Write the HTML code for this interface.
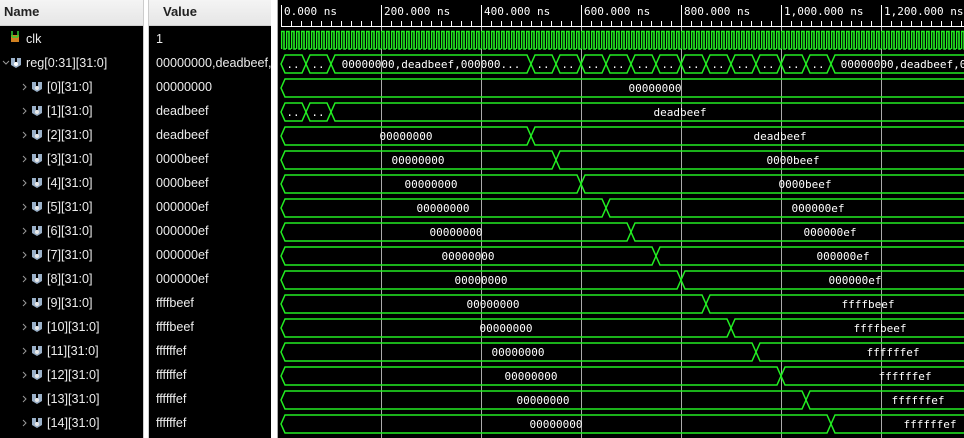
<!DOCTYPE html>
<html><head><meta charset="utf-8"><style>
body{margin:0;width:964px;height:438px;overflow:hidden;background:#fff;position:relative;font-family:"Liberation Sans",sans-serif}
.col{position:absolute;top:0;height:438px;background:#000;overflow:hidden}
.hdr{position:absolute;left:0;right:0;top:0;height:25px;background:linear-gradient(#f4f4f4,#e6e6e6);border-bottom:1px solid #cfcfcf;font-weight:bold;font-size:13px;color:#222;line-height:24px}
.r{position:absolute;height:24px;line-height:24px;font-size:12.6px;color:#ececec;white-space:nowrap}
</style></head><body>
<div class="col" style="left:0;width:143px;border-right:1px solid #ccc">
<div class="hdr" style="padding-left:4px">Name</div>
<svg width="143" height="438" style="position:absolute;left:0;top:0">
<g><rect x="11" y="35" width="8" height="7" fill="#d08020"/><path d="M12 31v6M18 31v6M12 37h6" stroke="#3c3" stroke-width="1.5" fill="none"/></g>
<path d="M3 61l3 3 3-3" stroke="#999" fill="none"/>
<g fill="#9ab0c8"><path d="M11 58h4v4h2v-4h4v7l-5 3-5-3z"/><circle cx="16" cy="64" r="2" fill="#fff"/></g>
<defs><g id="bi" fill="#9ab0c8"><path d="M0 0h4v4h2v-4h4v7l-5 3-5-3z"/><circle cx="5" cy="6" r="2" fill="#e8e8e8"/></g>
<path id="ch" d="M0 0l3 3-3 3" stroke="#999" fill="none"/></defs>
<use href="#ch" x="23" y="84"/><use href="#bi" x="32" y="82"/>
<use href="#ch" x="23" y="108"/><use href="#bi" x="32" y="106"/>
<use href="#ch" x="23" y="132"/><use href="#bi" x="32" y="130"/>
<use href="#ch" x="23" y="156"/><use href="#bi" x="32" y="154"/>
<use href="#ch" x="23" y="180"/><use href="#bi" x="32" y="178"/>
<use href="#ch" x="23" y="204"/><use href="#bi" x="32" y="202"/>
<use href="#ch" x="23" y="228"/><use href="#bi" x="32" y="226"/>
<use href="#ch" x="23" y="252"/><use href="#bi" x="32" y="250"/>
<use href="#ch" x="23" y="276"/><use href="#bi" x="32" y="274"/>
<use href="#ch" x="23" y="300"/><use href="#bi" x="32" y="298"/>
<use href="#ch" x="23" y="324"/><use href="#bi" x="32" y="322"/>
<use href="#ch" x="23" y="348"/><use href="#bi" x="32" y="346"/>
<use href="#ch" x="23" y="372"/><use href="#bi" x="32" y="370"/>
<use href="#ch" x="23" y="396"/><use href="#bi" x="32" y="394"/>
<use href="#ch" x="23" y="420"/><use href="#bi" x="32" y="418"/>
</svg>
<div class="r" style="left:26px;top:27px">clk</div>
<div class="r" style="left:26px;top:51px">reg[0:31][31:0]</div>
<div class="r" style="left:47px;top:75px">[0][31:0]</div>
<div class="r" style="left:47px;top:99px">[1][31:0]</div>
<div class="r" style="left:47px;top:123px">[2][31:0]</div>
<div class="r" style="left:47px;top:147px">[3][31:0]</div>
<div class="r" style="left:47px;top:171px">[4][31:0]</div>
<div class="r" style="left:47px;top:195px">[5][31:0]</div>
<div class="r" style="left:47px;top:219px">[6][31:0]</div>
<div class="r" style="left:47px;top:243px">[7][31:0]</div>
<div class="r" style="left:47px;top:267px">[8][31:0]</div>
<div class="r" style="left:47px;top:291px">[9][31:0]</div>
<div class="r" style="left:47px;top:315px">[10][31:0]</div>
<div class="r" style="left:47px;top:339px">[11][31:0]</div>
<div class="r" style="left:47px;top:363px">[12][31:0]</div>
<div class="r" style="left:47px;top:387px">[13][31:0]</div>
<div class="r" style="left:47px;top:411px">[14][31:0]</div>
</div>
<div class="col" style="left:148px;width:122px;border-left:1px solid #ccc">
<div class="hdr" style="padding-left:14px">Value</div>
<div class="r" style="left:7px;top:27px">1</div>
<div class="r" style="left:7px;top:51px">00000000,deadbeef,000000</div>
<div class="r" style="left:7px;top:75px">00000000</div>
<div class="r" style="left:7px;top:99px">deadbeef</div>
<div class="r" style="left:7px;top:123px">deadbeef</div>
<div class="r" style="left:7px;top:147px">0000beef</div>
<div class="r" style="left:7px;top:171px">0000beef</div>
<div class="r" style="left:7px;top:195px">000000ef</div>
<div class="r" style="left:7px;top:219px">000000ef</div>
<div class="r" style="left:7px;top:243px">000000ef</div>
<div class="r" style="left:7px;top:267px">000000ef</div>
<div class="r" style="left:7px;top:291px">ffffbeef</div>
<div class="r" style="left:7px;top:315px">ffffbeef</div>
<div class="r" style="left:7px;top:339px">ffffffef</div>
<div class="r" style="left:7px;top:363px">ffffffef</div>
<div class="r" style="left:7px;top:387px">ffffffef</div>
<div class="r" style="left:7px;top:411px">ffffffef</div>
</div>
<div style="position:absolute;left:277px;top:0;width:1px;height:438px;background:#aaa"></div>
<svg width="686" height="438" viewBox="278 0 686 438" style="position:absolute;left:278px;top:0;background:#000" font-family="DejaVu Sans Mono,Liberation Mono,monospace" font-size="11" fill="#fff">
<defs>
<pattern id="clk" x="281" y="0" width="5" height="438" patternUnits="userSpaceOnUse"><path d="M0.5 49V31.5H3V49H5" stroke="#22ee22" fill="none" stroke-width="1.6"/></pattern>
<pattern id="tk" x="281" y="0" width="10" height="30" patternUnits="userSpaceOnUse"><path d="M0.5 21V26" stroke="#fff"/></pattern>
</defs>
<rect x="281" y="0" width="690" height="27" fill="url(#tk)"/>
<path d="M281 26.5H964" stroke="#fff"/>
<g stroke="#fff"><path d="M281.5 5V26M381.5 5V26M481.5 5V26M581.5 5V26M681.5 5V26M781.5 5V26M881.5 5V26"/></g>
<g font-size="11"><text x="284" y="15">0.000 ns</text><text x="384" y="15">200.000 ns</text><text x="484" y="15">400.000 ns</text><text x="584" y="15">600.000 ns</text><text x="684" y="15">800.000 ns</text><text x="784" y="15">1,000.000 ns</text><text x="884" y="15">1,200.000 ns</text></g>
<g stroke="#aaa"><path d="M381.5 27V438M481.5 27V438M581.5 27V438M681.5 27V438M781.5 27V438M881.5 27V438"/></g>
<rect x="281" y="30" width="690" height="20" fill="url(#clk)"/>
<g stroke="#22ee22" fill="none" stroke-width="1.5">
<g transform="translate(0,51)">
<polygon points="281,13 285,4 302,4 306,13 302,22 285,22"/>
<polygon points="306,13 310,4 327,4 331,13 327,22 310,22"/>
<polygon points="331,13 335,4 527,4 531,13 527,22 335,22"/>
<polygon points="531,13 535,4 552,4 556,13 552,22 535,22"/>
<polygon points="556,13 560,4 577,4 581,13 577,22 560,22"/>
<polygon points="581,13 585,4 602,4 606,13 602,22 585,22"/>
<polygon points="606,13 610,4 627,4 631,13 627,22 610,22"/>
<polygon points="631,13 635,4 652,4 656,13 652,22 635,22"/>
<polygon points="656,13 660,4 677,4 681,13 677,22 660,22"/>
<polygon points="681,13 685,4 702,4 706,13 702,22 685,22"/>
<polygon points="706,13 710,4 727,4 731,13 727,22 710,22"/>
<polygon points="731,13 735,4 752,4 756,13 752,22 735,22"/>
<polygon points="756,13 760,4 777,4 781,13 777,22 760,22"/>
<polygon points="781,13 785,4 802,4 806,13 802,22 785,22"/>
<polygon points="806,13 810,4 827,4 831,13 827,22 810,22"/>
<polygon points="831,13 835,4 1026,4 1030,13 1026,22 835,22"/>
</g>
<g transform="translate(0,75)"><polygon points="281,13 285,4 1026,4 1030,13 1026,22 285,22"/></g>
<g transform="translate(0,99)">
<polygon points="281,13 285,4 302,4 306,13 302,22 285,22"/>
<polygon points="306,13 310,4 327,4 331,13 327,22 310,22"/>
<polygon points="331,13 335,4 1026,4 1030,13 1026,22 335,22"/></g>
<g transform="translate(0,123)"><polygon points="281,13 285,4 527,4 531,13 527,22 285,22"/><polygon points="531,13 535,4 1026,4 1030,13 1026,22 535,22"/></g>
<g transform="translate(0,147)"><polygon points="281,13 285,4 552,4 556,13 552,22 285,22"/><polygon points="556,13 560,4 1026,4 1030,13 1026,22 560,22"/></g>
<g transform="translate(0,171)"><polygon points="281,13 285,4 577,4 581,13 577,22 285,22"/><polygon points="581,13 585,4 1026,4 1030,13 1026,22 585,22"/></g>
<g transform="translate(0,195)"><polygon points="281,13 285,4 602,4 606,13 602,22 285,22"/><polygon points="606,13 610,4 1026,4 1030,13 1026,22 610,22"/></g>
<g transform="translate(0,219)"><polygon points="281,13 285,4 627,4 631,13 627,22 285,22"/><polygon points="631,13 635,4 1026,4 1030,13 1026,22 635,22"/></g>
<g transform="translate(0,243)"><polygon points="281,13 285,4 652,4 656,13 652,22 285,22"/><polygon points="656,13 660,4 1026,4 1030,13 1026,22 660,22"/></g>
<g transform="translate(0,267)"><polygon points="281,13 285,4 677,4 681,13 677,22 285,22"/><polygon points="681,13 685,4 1026,4 1030,13 1026,22 685,22"/></g>
<g transform="translate(0,291)"><polygon points="281,13 285,4 702,4 706,13 702,22 285,22"/><polygon points="706,13 710,4 1026,4 1030,13 1026,22 710,22"/></g>
<g transform="translate(0,315)"><polygon points="281,13 285,4 727,4 731,13 727,22 285,22"/><polygon points="731,13 735,4 1026,4 1030,13 1026,22 735,22"/></g>
<g transform="translate(0,339)"><polygon points="281,13 285,4 752,4 756,13 752,22 285,22"/><polygon points="756,13 760,4 1026,4 1030,13 1026,22 760,22"/></g>
<g transform="translate(0,363)"><polygon points="281,13 285,4 777,4 781,13 777,22 285,22"/><polygon points="781,13 785,4 1026,4 1030,13 1026,22 785,22"/></g>
<g transform="translate(0,387)"><polygon points="281,13 285,4 802,4 806,13 802,22 285,22"/><polygon points="806,13 810,4 1026,4 1030,13 1026,22 810,22"/></g>
<g transform="translate(0,411)"><polygon points="281,13 285,4 827,4 831,13 827,22 285,22"/><polygon points="831,13 835,4 1026,4 1030,13 1026,22 835,22"/></g>
</g>
<g text-anchor="middle">
<text x="293" y="68">..</text><text x="318" y="68">..</text>
<text x="431" y="68">00000000,deadbeef,000000...</text>
<text x="543" y="68">..</text><text x="568" y="68">..</text><text x="593" y="68">..</text><text x="618" y="68">..</text><text x="643" y="68">..</text><text x="668" y="68">..</text><text x="693" y="68">..</text><text x="718" y="68">..</text><text x="743" y="68">..</text><text x="768" y="68">..</text><text x="793" y="68">..</text><text x="818" y="68">..</text>
<text x="930" y="68">00000000,deadbeef,000000...</text>
<text x="655" y="92">00000000</text>
<text x="293" y="116">..</text><text x="318" y="116">..</text><text x="680" y="116">deadbeef</text>
<text x="406" y="140">00000000</text><text x="780" y="140">deadbeef</text>
<text x="418" y="164">00000000</text><text x="793" y="164">0000beef</text>
<text x="431" y="188">00000000</text><text x="805" y="188">0000beef</text>
<text x="443" y="212">00000000</text><text x="818" y="212">000000ef</text>
<text x="456" y="236">00000000</text><text x="830" y="236">000000ef</text>
<text x="468" y="260">00000000</text><text x="843" y="260">000000ef</text>
<text x="481" y="284">00000000</text><text x="855" y="284">000000ef</text>
<text x="493" y="308">00000000</text><text x="868" y="308">ffffbeef</text>
<text x="506" y="332">00000000</text><text x="880" y="332">ffffbeef</text>
<text x="518" y="356">00000000</text><text x="893" y="356">ffffffef</text>
<text x="531" y="380">00000000</text><text x="905" y="380">ffffffef</text>
<text x="543" y="404">00000000</text><text x="918" y="404">ffffffef</text>
<text x="556" y="428">00000000</text><text x="930" y="428">ffffffef</text>
</g>
</svg>
</body></html>
